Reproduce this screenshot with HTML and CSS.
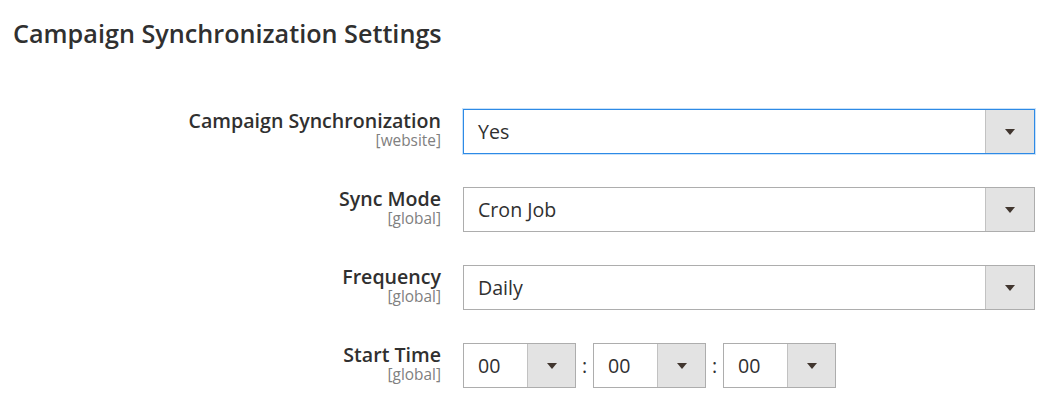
FILE: index.html
```html
<!DOCTYPE html>
<html lang="en">
<head>
    <meta charset="UTF-8">
    <title>Campaign Synchronization Settings</title>
    <link rel="stylesheet" href="styles.css">
</head>
<body>
    <div class="section">
        <h2 class="section-title">Campaign Synchronization Settings</h2>
        <div class="form">
            <div class="row">
                <div class="label">
                    <span class="label-text">Campaign Synchronization</span>
                    <span class="scope">[website]</span>
                </div>
                <div class="control">
                    <div class="select focused">
                        <span class="select-value">Yes</span>
                        <span class="select-arrow"></span>
                    </div>
                </div>
            </div>
            <div class="row">
                <div class="label">
                    <span class="label-text">Sync Mode</span>
                    <span class="scope">[global]</span>
                </div>
                <div class="control">
                    <div class="select">
                        <span class="select-value">Cron Job</span>
                        <span class="select-arrow"></span>
                    </div>
                </div>
            </div>
            <div class="row">
                <div class="label">
                    <span class="label-text">Frequency</span>
                    <span class="scope">[global]</span>
                </div>
                <div class="control">
                    <div class="select">
                        <span class="select-value">Daily</span>
                        <span class="select-arrow"></span>
                    </div>
                </div>
            </div>
            <div class="row">
                <div class="label">
                    <span class="label-text">Start Time</span>
                    <span class="scope">[global]</span>
                </div>
                <div class="control time">
                    <div class="select small">
                        <span class="select-value">00</span>
                        <span class="select-arrow"></span>
                    </div>
                    <span class="colon">:</span>
                    <div class="select small">
                        <span class="select-value">00</span>
                        <span class="select-arrow"></span>
                    </div>
                    <span class="colon">:</span>
                    <div class="select small">
                        <span class="select-value">00</span>
                        <span class="select-arrow"></span>
                    </div>
                </div>
            </div>
        </div>
    </div>
</body>
</html>
```

FILE: styles.css
```css
body
{
    margin: 0;
    font-family: "Open Sans", Arial, sans-serif;
    color: #303030;
    background: #fff;
}
.section
{
    padding: 16px 0 0 13px;
}
.section-title
{
    margin: 0;
    font-size: 25.2px;
    font-weight: 600;
    line-height: 34px;
    color: #303030;
}
.form
{
    display: flex;
    flex-direction: column;
    gap: 33px;
    margin-top: 59px;
}
.row
{
    display: flex;
    align-items: flex-start;
}
.label
{
    width: 428px;
    display: flex;
    flex-direction: column;
    align-items: flex-end;
    padding-top: 1px;
}
.label-text
{
    font-size: 19.6px;
    font-weight: 600;
    line-height: 22px;
}
.scope
{
    font-size: 15.4px;
    color: #808080;
    line-height: 18px;
}
.control
{
    margin-left: 22px;
    width: 572px;
}
.control.time
{
    display: flex;
    align-items: center;
}
.select
{
    display: flex;
    height: 45px;
    box-sizing: border-box;
    border: 1px solid #adadad;
    background: #fff;
}
.select.focused
{
    border-color: #2d8ae6;
    box-shadow: 0 0 0 1px rgba(45,138,230,0.25);
}
.select-value
{
    flex: 1;
    padding-left: 14px;
    font-size: 19.6px;
    line-height: 43px;
    color: #303030;
}
.select-arrow
{
    width: 48px;
    border-left: 1px solid #c2c2c2;
    background: #e3e3e3;
    display: flex;
    align-items: center;
    justify-content: center;
}
.select-arrow::after
{
    content: "";
    border-left: 5px solid transparent;
    border-right: 5px solid transparent;
    border-top: 6px solid #41362f;
}
.select.small
{
    width: 113px;
}
.select.small .select-arrow
{
    width: 47px;
}
.colon
{
    width: 17px;
    text-align: center;
    font-size: 19.6px;
    color: #303030;
}
```
